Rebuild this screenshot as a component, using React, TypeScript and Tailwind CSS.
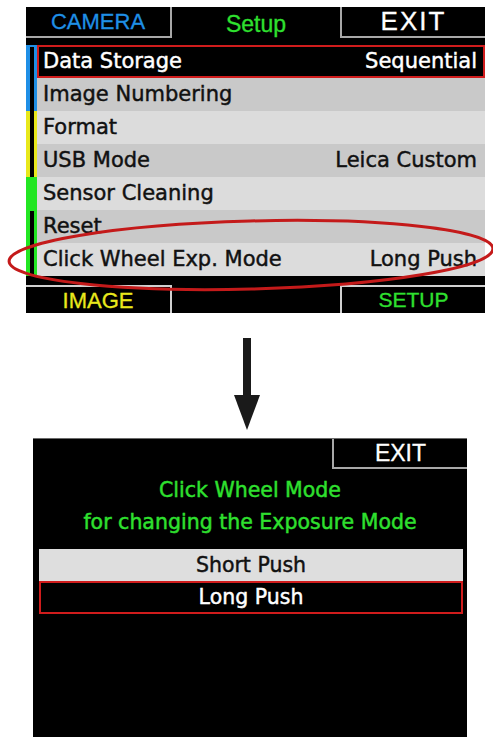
const ui = "font-['DejaVu_Sans',sans-serif] [-webkit-text-stroke:0.45px_currentColor]";
const tab = "font-['Liberation_Sans',Arial,sans-serif] [-webkit-text-stroke:0.3px_currentColor]";

const rows = [
  { label: "Data Storage", value: "Sequential", active: true },
  { label: "Image Numbering", value: "" },
  { label: "Format", value: "" },
  { label: "USB Mode", value: "Leica Custom" },
  { label: "Sensor Cleaning", value: "" },
  { label: "Reset", value: "" },
  { label: "Click Wheel Exp. Mode", value: "Long Push" },
];

function MenuRow({ label, value, active, index }: { label: string; value: string; active?: boolean; index: number }) {
  if (active) {
    return (
      <div className="h-[33px] flex items-center justify-between bg-black border-2 border-[#d01c1c] pl-[4px] pr-[6px] text-white">
        <span>{label}</span>
        <span>{value}</span>
      </div>
    );
  }
  const shade = index % 2 === 1 ? "bg-[#c9c9c9]" : "bg-[#dcdcdc]";
  return (
    <div className={`h-[33px] flex items-center justify-between pl-[6px] pr-[8px] text-[#111] ${shade}`}>
      <span>{label}</span>
      <span>{value}</span>
    </div>
  );
}

function SetupScreen() {
  return (
    <div className="w-[459px] h-[306px] ml-[26px] bg-black flex flex-col">
      {/* tabs */}
      <div className={`h-[31px] flex ${tab}`}>
        <div className="w-[146px] flex items-center justify-center border-r-2 border-b-2 border-[#a8a8a8] text-[22px] text-[#1f8fe6]">
          CAMERA
        </div>
        <div className="flex-1 flex items-center justify-center text-[23px] text-[#2fe02f] pt-[4px]">Setup</div>
        <div className="w-[145px] flex items-center justify-center border-l-2 border-b-2 border-[#a8a8a8] text-[26px] tracking-[2px] text-white">
          EXIT
        </div>
      </div>

      {/* list */}
      <div className={`mt-[7px] flex text-[21px] ${ui}`}>
        <div className="w-[11px] flex flex-col">
          <div className="h-[66px] bg-[#1f8fe6] pt-[2px]">
            <div className="ml-[4px] w-[4px] h-full bg-black" />
          </div>
          <div className="h-[66px] bg-[#e8e81c]">
            <div className="ml-[4px] w-[4px] h-full bg-black" />
          </div>
          <div className="h-[99px] bg-[#22e622] pt-[34px]">
            <div className="ml-[4px] w-[4px] h-full bg-black" />
          </div>
        </div>
        <div className="flex-1 flex flex-col">
          {rows.map((r, i) => (
            <MenuRow key={r.label} index={i} {...r} />
          ))}
        </div>
      </div>

      {/* bottom tabs */}
      <div className={`mt-auto h-[28px] flex ${tab}`}>
        <div className="w-[146px] flex items-center justify-center border-r-2 border-t-2 border-[#d0d0d0] text-[22px] text-[#e8e81c]">
          IMAGE
        </div>
        <div className="flex-1" />
        <div className="w-[145px] flex items-center justify-center border-l-2 border-t-2 border-[#d0d0d0] text-[21px] text-[#2fe02f]">
          SETUP
        </div>
      </div>
    </div>
  );
}

function Arrow() {
  return (
    <div className="h-[125px] flex justify-center">
      <svg width="30" height="125" viewBox="0 0 30 125">
        <rect x="11" y="25" width="8" height="60" fill="#1a1a1a" />
        <polygon points="2,82 28,82 15,117" fill="#1a1a1a" />
      </svg>
    </div>
  );
}

function ModeScreen() {
  return (
    <div className={`w-[434px] h-[299px] ml-[33px] bg-black border-t border-[#6a6a6a] flex flex-col ${ui}`}>
      <div className="flex justify-end">
        <div className={`w-[135px] h-[30px] flex items-center justify-center border-l-2 border-b-2 border-[#a8a8a8] text-[23px] text-white ${tab}`}>
          EXIT
        </div>
      </div>
      <div className="mt-[5px] text-center text-[20.5px] leading-[32px] text-[#2fe02f]">
        <div>Click Wheel Mode</div>
        <div>for changing the Exposure Mode</div>
      </div>
      <div className="mt-[11px] ml-[6px] mr-[4px] text-[20.5px]">
        <div className="h-[32px] flex items-center justify-center bg-[#dedede] text-[#111]">Short Push</div>
        <div className="h-[33px] flex items-center justify-center bg-black border-2 border-[#d01c1c] text-white">Long Push</div>
      </div>
    </div>
  );
}

export default function App() {
  return (
    <div className="relative w-[493px] h-[737px] bg-white overflow-hidden pt-[7px]">
      <SetupScreen />
      <Arrow />
      <ModeScreen />
      {/* red highlight ring around the last menu entry */}
      <svg className="absolute left-0 top-0 pointer-events-none" width="493" height="320" viewBox="0 0 493 320">
        <ellipse cx="251" cy="255" rx="242" ry="34" fill="none" stroke="#c41a1a" strokeWidth="3" transform="rotate(-1.5 251 255)" />
      </svg>
    </div>
  );
}
